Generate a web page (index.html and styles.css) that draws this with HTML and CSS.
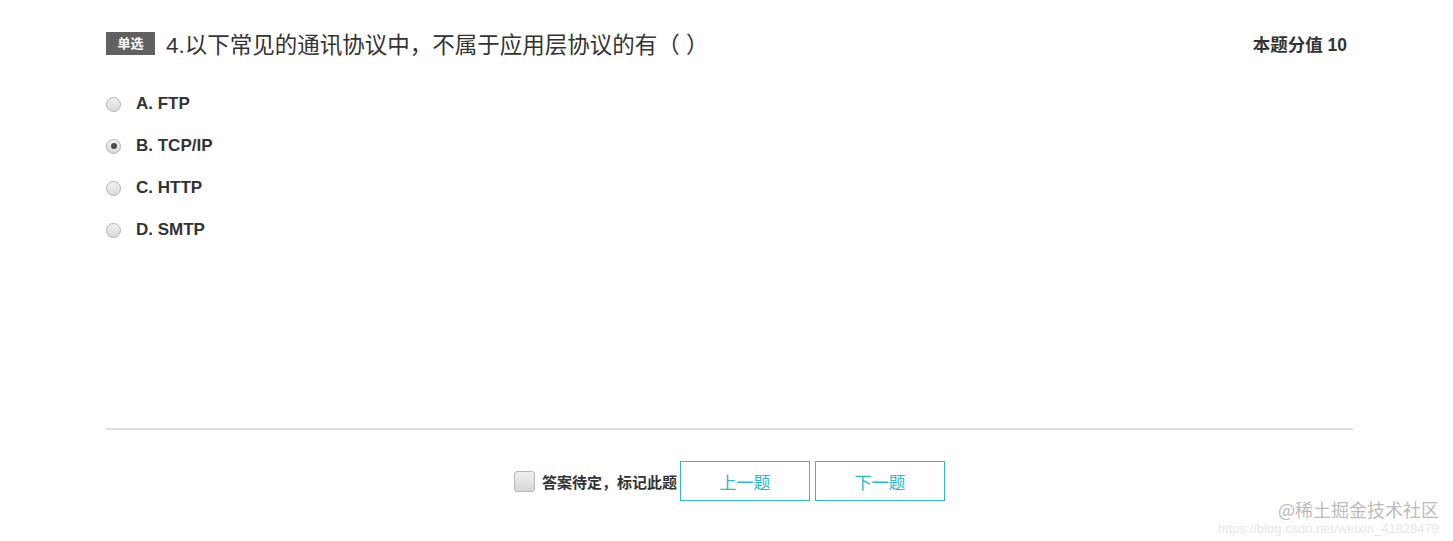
FILE: index.html
```html
<!DOCTYPE html>
<html lang="zh-CN">
<head>
    <meta charset="UTF-8">
    <title>单选题</title>
    <link rel="stylesheet" href="styles.css">
</head>
<body>
    <div class="paper">
        <div class="question-head">
            <div class="question-title">
                <span class="tag">单选</span>
                <span class="title">4.以下常见的通讯协议中，不属于应用层协议的有（ ）</span>
            </div>
            <span class="score">本题分值 10</span>
        </div>

        <ul class="options">
            <li><span class="radio"></span>A. FTP</li>
            <li><span class="radio checked"></span>B. TCP/IP</li>
            <li><span class="radio"></span>C. HTTP</li>
            <li><span class="radio"></span>D. SMTP</li>
        </ul>

        <div class="divider"></div>

        <div class="footer">
            <label class="mark"><span class="checkbox"></span>答案待定，标记此题</label>
            <button class="btn">上一题</button>
            <button class="btn">下一题</button>
        </div>
    </div>

    <div class="watermark">
        <span class="brand">@稀土掘金技术社区</span>
        <span class="url">https://blog.csdn.net/weixin_41828479</span>
    </div>
</body>
</html>
```

FILE: styles.css
```css
body {
    margin: 0;
    background: #fff;
    color: #333;
    font-family: "Liberation Sans", Arial, "Noto Sans CJK SC", sans-serif;
}
.paper {
    width: 1247px;
    margin-left: 106px;
    padding-top: 29px;
}
.question-head {
    display: flex;
    justify-content: space-between;
    align-items: center;
    height: 28px;
}
.question-title {
    display: flex;
    align-items: center;
}
.tag {
    display: inline-block;
    width: 49px;
    height: 23px;
    line-height: 23px;
    text-align: center;
    background: #616161;
    color: #fff;
    font-size: 13px;
    font-weight: bold;
}
.title {
    margin-left: 11px;
    font-size: 22.5px;
    color: #333;
    font-family: "Liberation Sans", "Noto Sans CJK SC", sans-serif;
}
.score {
    margin-right: 6px;
    font-size: 17.5px;
    font-weight: bold;
    color: #333;
}
.options {
    list-style: none;
    margin: 26px 0 0;
    padding: 0;
}
.options li {
    display: flex;
    align-items: center;
    height: 42px;
    font-size: 17px;
    font-weight: bold;
    color: #333;
}
.radio {
    position: relative;
    width: 13px;
    height: 13px;
    margin-right: 15px;
    border: 1px solid #b3b3b3;
    border-radius: 50%;
    background: linear-gradient(#f2f2f2, #d9d9d9);
}
.radio.checked::after {
    content: "";
    position: absolute;
    left: 3.5px;
    top: 3.5px;
    width: 6px;
    height: 6px;
    border-radius: 50%;
    background: #4a4a4a;
}
.divider {
    height: 2px;
    margin-top: 177px;
    background: #dedede;
}
.footer {
    display: flex;
    justify-content: center;
    align-items: center;
    margin-top: 31px;
    gap: 5px;
}
.mark {
    display: flex;
    align-items: center;
    font-size: 15px;
    font-weight: bold;
    color: #333;
    font-family: "Noto Sans CJK SC", sans-serif;
    margin-right: -2px;
}
.checkbox {
    width: 19px;
    height: 19px;
    margin-right: 7px;
    border: 1px solid #b8b8b8;
    border-radius: 3px;
    background: linear-gradient(#f0f0f0, #d6d6d6);
}
.btn {
    width: 130px;
    height: 40px;
    border: 1px solid #2bbbcc;
    background: #fff;
    color: #2bbbcc;
    font-size: 17px;
    font-family: "Noto Sans CJK SC", sans-serif;
}
.watermark {
    position: absolute;
    right: 14px;
    top: 497px;
    display: flex;
    flex-direction: column;
    align-items: flex-end;
    font-family: "Noto Sans CJK SC", sans-serif;
}
.watermark .brand {
    font-size: 18px;
    line-height: 24px;
    color: #bbb;
    white-space: nowrap;
}
.watermark .url {
    font-size: 13px;
    line-height: 15px;
    color: #e6e6e6;
    white-space: nowrap;
    font-family: "Liberation Sans", sans-serif;
}
```
